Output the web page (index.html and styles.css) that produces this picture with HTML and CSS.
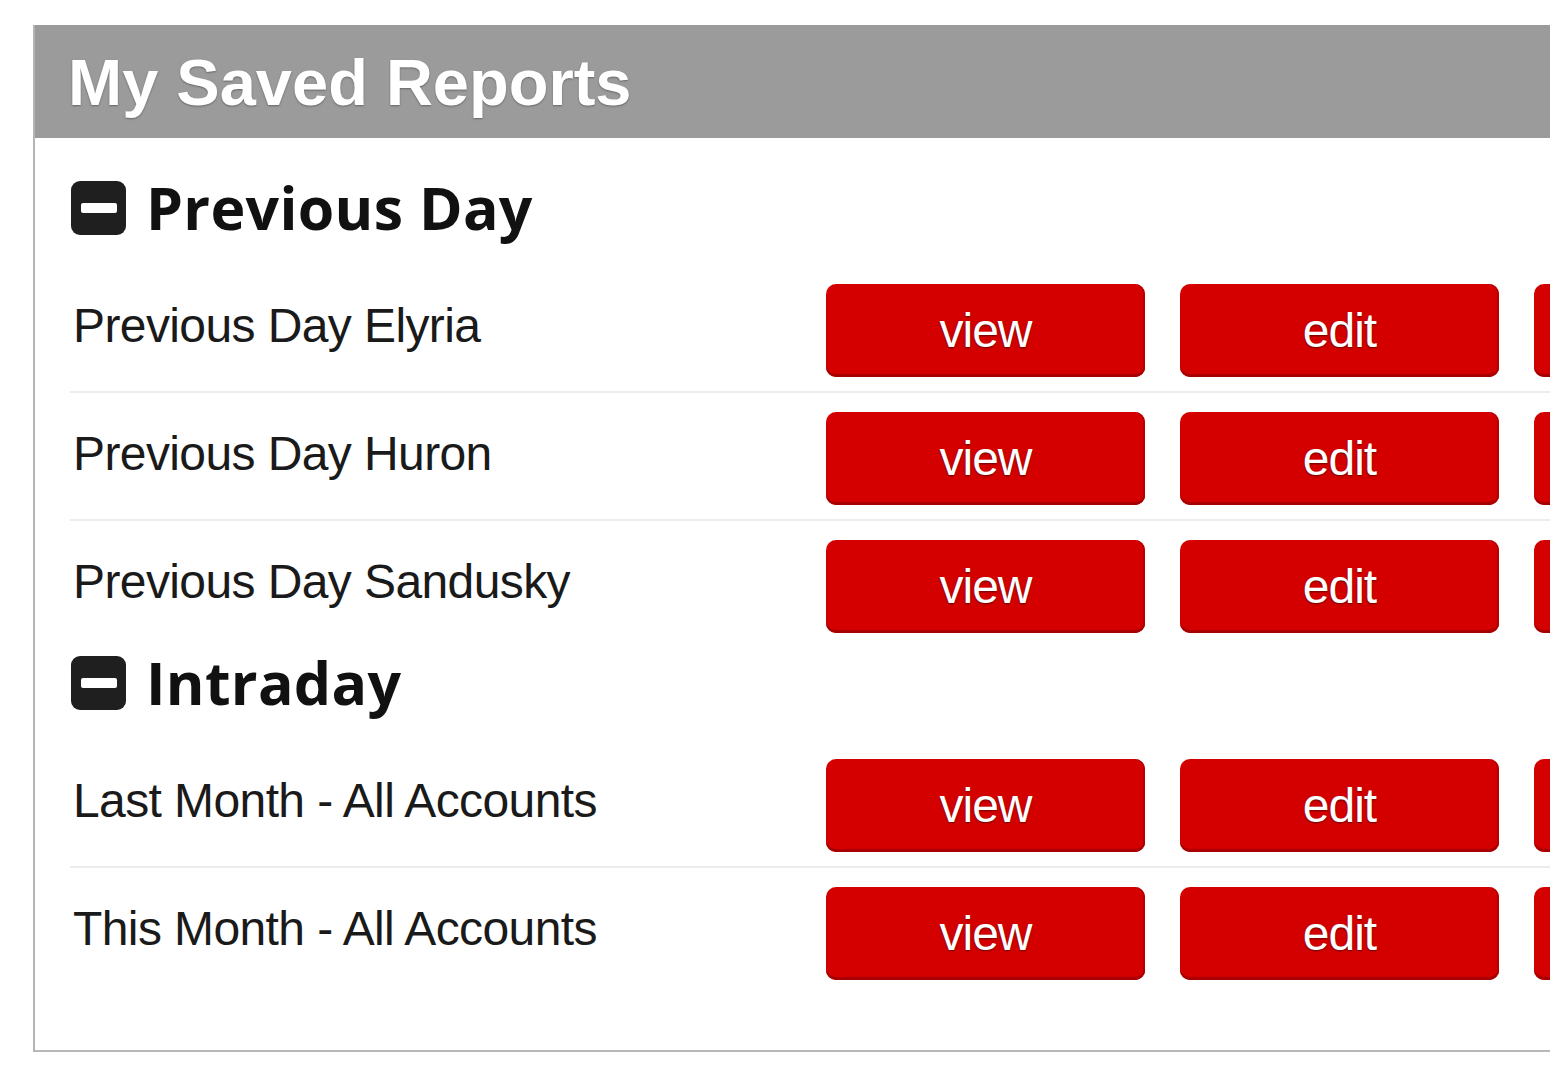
FILE: index.html
```html
<!DOCTYPE html>
<html lang="en">
<head>
<meta charset="utf-8">
<title>My Saved Reports</title>
<link rel="stylesheet" href="styles.css">
</head>
<body>
<div class="panel">
  <div class="panel-header">
    <h1 class="panel-title">My Saved Reports</h1>
  </div>
  <div class="panel-body">
    <section class="group">
      <h2 class="group-title"><span class="toggle"><span class="toggle-bar"></span></span><span class="group-label">Previous Day</span></h2>
      <div class="row">
        <span class="name">Previous Day Elyria</span>
        <button class="btn">view</button>
        <button class="btn">edit</button>
        <button class="btn" aria-label="delete"></button>
      </div>
      <div class="row">
        <span class="name">Previous Day Huron</span>
        <button class="btn">view</button>
        <button class="btn">edit</button>
        <button class="btn" aria-label="delete"></button>
      </div>
      <div class="row">
        <span class="name">Previous Day Sandusky</span>
        <button class="btn">view</button>
        <button class="btn">edit</button>
        <button class="btn" aria-label="delete"></button>
      </div>
    </section>
    <section class="group">
      <h2 class="group-title"><span class="toggle"><span class="toggle-bar"></span></span><span class="group-label">Intraday</span></h2>
      <div class="row">
        <span class="name">Last Month - All Accounts</span>
        <button class="btn">view</button>
        <button class="btn">edit</button>
        <button class="btn" aria-label="delete"></button>
      </div>
      <div class="row">
        <span class="name">This Month - All Accounts</span>
        <button class="btn">view</button>
        <button class="btn">edit</button>
        <button class="btn" aria-label="delete"></button>
      </div>
    </section>
  </div>
</div>
</body>
</html>
```
FILE: styles.css
```css
html, body {
  margin: 0;
  padding: 0;
  background: #ffffff;
  overflow: hidden;
}

body {
  font-family: "Liberation Sans", Arial, sans-serif;
  color: #1a1a1a;
}

.panel {
  margin: 25px 0 0 33px;
  width: 1700px;
  border-left: 2px solid #b4b4b4;
  border-bottom: 2px solid #b8b8b8;
  background: #ffffff;
}

.panel-header {
  height: 113px;
  background: #9b9b9b;
  display: flex;
  align-items: center;
  padding-left: 33px;
}

.panel-title {
  margin: 0;
  font-family: "Liberation Sans", Arial, sans-serif;
  font-weight: 700;
  font-size: 65px;
  line-height: 1;
  color: #ffffff;
  text-shadow: 0 1px 2px rgba(0, 0, 0, 0.35);
  padding-top: 2px;
}

.panel-body {
  padding: 34px 0 56px 35px;
}

.group-title {
  display: flex;
  align-items: center;
  gap: 20px;
  height: 55px;
  margin: 8px 0 30px;
  font-family: "Open Sans", "DejaVu Sans", sans-serif;
  font-weight: 700;
  font-size: 59px;
  letter-spacing: 0.3px;
  line-height: 1;
  color: #111111;
}

.group-label {
  display: block;
  margin-top: -1px;
}

.toggle {
  width: 55px;
  height: 54px;
  margin-left: 1px;
  border-radius: 9px;
  background: #1f1f1f;
  display: flex;
  align-items: center;
  justify-content: center;
  flex: none;
}

.toggle-bar {
  width: 36px;
  height: 10px;
  border-radius: 2px;
  background: #ffffff;
}

.row {
  display: grid;
  grid-template-columns: 721px 319px 319px 319px;
  column-gap: 35px;
  align-items: center;
  padding: 19px 0 14px;
  border-bottom: 2px solid #ececec;
}

.row:last-child {
  border-bottom: none;
}

.name {
  font-size: 48px;
  letter-spacing: -0.6px;
  line-height: 1;
  padding: 0 0 10px 3px;
  color: #1a1a1a;
}

.btn {
  height: 93px;
  border: none;
  border-radius: 10px;
  background: #d40000;
  box-shadow: inset 0 -3px 0 #a80000, inset -2px 0 0 #b80000;
  color: #ffffff;
  font-family: "Liberation Sans", Arial, sans-serif;
  font-size: 48px;
  letter-spacing: -1px;
  line-height: 1;
  text-shadow: 0 1px 2px rgba(60, 0, 0, 0.7);
  padding: 0;
  cursor: pointer;
}
```
